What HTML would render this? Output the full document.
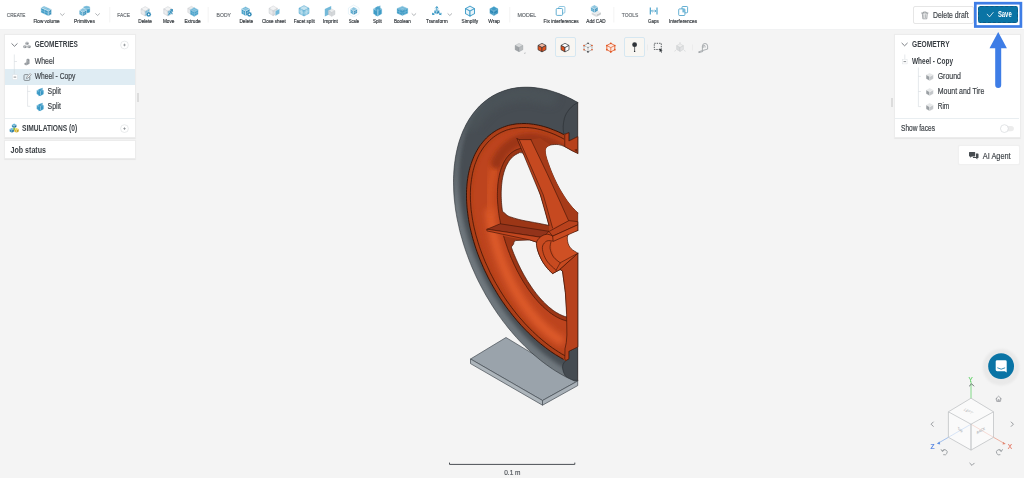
<!DOCTYPE html>
<html>
<head>
<meta charset="utf-8">
<title>Workbench</title>
<style>
*{box-sizing:border-box;margin:0;padding:0}
html,body{width:1024px;height:478px;overflow:hidden}
body{background:#f4f4f4;font-family:"Liberation Sans",sans-serif;color:#3c4146;position:relative}
.abs{position:absolute}
.tx{position:absolute;white-space:nowrap;line-height:1;transform-origin:0 50%;display:block}
#topbar{position:absolute;left:0;top:0;width:1024px;height:29px;background:#fff}
#topline{position:absolute;left:0;top:29px;width:1024px;height:1px;background:#f1f2f3}
.panel{position:absolute;background:#fff;border:1px solid #ececec;border-radius:1px;box-shadow:0 0.5px 1px rgba(0,0,0,0.06)}
.hl{position:absolute;background:#dfecf3}
.sep{position:absolute;height:1px;background:#e9eef1}
.btn{position:absolute;border-radius:2px}
</style>
</head>
<body>

<svg class="abs" style="left:0;top:0" width="1024" height="478" viewBox="0 0 1024 478">
<defs>
<clipPath id="cTire"><path d="M577.9,102.5 L574.7,100.8 L571.6,99.1 L568.4,97.6 L565.2,96.1 L562.0,94.8 L558.9,93.5 L555.7,92.4 L552.6,91.4 L549.4,90.4 L546.3,89.6 L543.2,88.9 L540.1,88.4 L537.1,87.9 L534.0,87.6 L531.0,87.3 L528.0,87.2 L525.1,87.2 L522.2,87.3 L519.3,87.5 L516.4,87.8 L513.6,88.3 L510.9,88.8 L508.1,89.5 L505.5,90.3 L502.8,91.2 L500.3,92.2 L497.7,93.3 L495.3,94.5 L492.9,95.8 L490.5,97.3 L488.2,98.8 L486.0,100.5 L483.8,102.2 L481.7,104.1 L479.6,106.0 L477.7,108.1 L475.8,110.2 L473.9,112.5 L472.2,114.8 L470.5,117.2 L468.8,119.8 L467.3,122.4 L465.8,125.1 L464.5,127.9 L463.1,130.8 L461.9,133.7 L460.8,136.7 L459.7,139.8 L458.7,143.0 L457.8,146.3 L457.0,149.6 L456.3,153.0 L455.6,156.4 L455.1,160.0 L454.6,163.5 L454.2,167.2 L453.9,170.8 L453.7,174.6 L453.5,178.4 L453.5,182.2 L453.6,186.1 L453.7,190.0 L453.9,193.9 L454.2,197.9 L454.6,201.9 L455.1,205.9 L455.6,210.0 L456.3,214.1 L457.0,218.2 L457.9,222.3 L458.8,226.4 L459.7,230.6 L460.8,234.7 L462.0,238.8 L463.2,243.0 L464.5,247.1 L465.9,251.3 L467.4,255.4 L468.9,259.5 L470.5,263.6 L472.2,267.7 L474.0,271.7 L475.8,275.8 L477.7,279.8 L479.7,283.7 L481.8,287.7 L483.9,291.6 L486.0,295.4 L488.3,299.2 L490.6,303.0 L492.9,306.7 L495.4,310.4 L497.8,314.0 L500.4,317.6 L502.9,321.1 L505.6,324.5 L508.2,327.9 L511.0,331.2 L513.7,334.4 L516.5,337.6 L519.4,340.7 L522.3,343.7 L525.2,346.6 L528.1,349.4 L531.1,352.2 L534.1,354.9 L537.2,357.5 L540.2,360.0 L543.3,362.4 L546.4,364.7 L549.5,366.9 L552.7,369.1 L555.8,371.1 L559.0,373.0 L562.1,374.8 L565.3,376.6 L568.5,378.2 L571.7,379.7 L574.8,381.1 L577.9,380.5 Z"/></clipPath>
<clipPath id="cRim"><path d="M563.5,134.4 L561.0,133.1 L558.4,131.9 L555.9,130.8 L553.3,129.8 L550.8,128.8 L548.3,127.9 L545.8,127.1 L543.3,126.4 L540.8,125.7 L538.4,125.2 L535.9,124.7 L533.5,124.3 L531.1,124.0 L528.7,123.7 L526.3,123.6 L524.0,123.5 L521.7,123.6 L519.4,123.7 L517.2,123.8 L515.0,124.1 L512.8,124.5 L510.6,124.9 L508.5,125.4 L506.5,126.0 L504.4,126.7 L502.4,127.5 L500.5,128.3 L498.6,129.2 L496.7,130.2 L494.9,131.3 L493.1,132.5 L491.4,133.7 L489.7,135.1 L488.1,136.4 L486.5,137.9 L485.0,139.5 L483.6,141.1 L482.2,142.8 L480.8,144.5 L479.5,146.3 L478.3,148.2 L477.1,150.2 L476.0,152.2 L474.9,154.3 L473.9,156.5 L473.0,158.7 L472.1,161.0 L471.3,163.3 L470.5,165.7 L469.8,168.1 L469.2,170.6 L468.6,173.2 L468.1,175.8 L467.7,178.4 L467.3,181.1 L467.0,183.9 L466.8,186.7 L466.6,189.5 L466.5,192.3 L466.5,195.2 L466.5,198.2 L466.6,201.2 L466.8,204.2 L467.0,207.2 L467.3,210.2 L467.7,213.3 L468.1,216.4 L468.6,219.6 L469.1,222.7 L469.7,225.9 L470.4,229.0 L471.2,232.2 L472.0,235.4 L472.8,238.6 L473.8,241.8 L474.8,245.1 L475.8,248.3 L476.9,251.5 L478.1,254.7 L479.3,257.9 L480.6,261.1 L482.0,264.3 L483.4,267.5 L484.8,270.7 L486.4,273.8 L487.9,277.0 L489.5,280.1 L491.2,283.2 L492.9,286.2 L494.7,289.3 L496.5,292.3 L498.3,295.3 L500.2,298.2 L502.2,301.2 L504.2,304.0 L506.2,306.9 L508.3,309.7 L510.4,312.4 L512.5,315.2 L514.7,317.8 L516.9,320.5 L519.1,323.0 L521.4,325.6 L523.7,328.0 L526.0,330.4 L528.4,332.8 L530.8,335.1 L533.2,337.4 L535.6,339.5 L538.1,341.7 L540.5,343.7 L543.0,345.7 L545.5,347.6 L548.0,349.5 L550.5,351.3 L553.0,353.0 L555.6,354.7 L558.1,356.2 L560.6,357.7 L563.2,359.2 L565.7,360.7 L568.8,358.8 L568.8,351.3 L577.9,346.9 L577.9,136.5 L568.9,141.0 L568.9,132.8 Z"/></clipPath>
<filter id="b1" x="-30%" y="-30%" width="160%" height="160%"><feGaussianBlur stdDeviation="1"/></filter>
<filter id="b2" x="-30%" y="-30%" width="160%" height="160%"><feGaussianBlur stdDeviation="2"/></filter>
<filter id="b3" x="-30%" y="-30%" width="160%" height="160%"><feGaussianBlur stdDeviation="3"/></filter>
<filter id="b4" x="-30%" y="-30%" width="160%" height="160%"><feGaussianBlur stdDeviation="4.5"/></filter>
</defs>
<g stroke="#444b51" stroke-width="0.7" stroke-linejoin="round">
<path d="M506,337.5 L470.5,359 L542.5,400.5 L577.7,381 Z" fill="#9aa3ab"/>
<path d="M470.5,359 L542.5,400.5 L542.5,405.2 L470.5,363.6 Z" fill="#adb5bb"/>
<path d="M542.5,400.5 L577.7,381 L577.7,385.6 L542.5,405.2 Z" fill="#a9b1b8"/>
</g>
<path d="M577.9,102.5 L574.7,100.8 L571.6,99.1 L568.4,97.6 L565.2,96.1 L562.0,94.8 L558.9,93.5 L555.7,92.4 L552.6,91.4 L549.4,90.4 L546.3,89.6 L543.2,88.9 L540.1,88.4 L537.1,87.9 L534.0,87.6 L531.0,87.3 L528.0,87.2 L525.1,87.2 L522.2,87.3 L519.3,87.5 L516.4,87.8 L513.6,88.3 L510.9,88.8 L508.1,89.5 L505.5,90.3 L502.8,91.2 L500.3,92.2 L497.7,93.3 L495.3,94.5 L492.9,95.8 L490.5,97.3 L488.2,98.8 L486.0,100.5 L483.8,102.2 L481.7,104.1 L479.6,106.0 L477.7,108.1 L475.8,110.2 L473.9,112.5 L472.2,114.8 L470.5,117.2 L468.8,119.8 L467.3,122.4 L465.8,125.1 L464.5,127.9 L463.1,130.8 L461.9,133.7 L460.8,136.7 L459.7,139.8 L458.7,143.0 L457.8,146.3 L457.0,149.6 L456.3,153.0 L455.6,156.4 L455.1,160.0 L454.6,163.5 L454.2,167.2 L453.9,170.8 L453.7,174.6 L453.5,178.4 L453.5,182.2 L453.6,186.1 L453.7,190.0 L453.9,193.9 L454.2,197.9 L454.6,201.9 L455.1,205.9 L455.6,210.0 L456.3,214.1 L457.0,218.2 L457.9,222.3 L458.8,226.4 L459.7,230.6 L460.8,234.7 L462.0,238.8 L463.2,243.0 L464.5,247.1 L465.9,251.3 L467.4,255.4 L468.9,259.5 L470.5,263.6 L472.2,267.7 L474.0,271.7 L475.8,275.8 L477.7,279.8 L479.7,283.7 L481.8,287.7 L483.9,291.6 L486.0,295.4 L488.3,299.2 L490.6,303.0 L492.9,306.7 L495.4,310.4 L497.8,314.0 L500.4,317.6 L502.9,321.1 L505.6,324.5 L508.2,327.9 L511.0,331.2 L513.7,334.4 L516.5,337.6 L519.4,340.7 L522.3,343.7 L525.2,346.6 L528.1,349.4 L531.1,352.2 L534.1,354.9 L537.2,357.5 L540.2,360.0 L543.3,362.4 L546.4,364.7 L549.5,366.9 L552.7,369.1 L555.8,371.1 L559.0,373.0 L562.1,374.8 L565.3,376.6 L568.5,378.2 L571.7,379.7 L574.8,381.1 L577.9,380.5 Z" fill="#70787e" />
<g clip-path="url(#cTire)">
<path d="M484.6,278.7 L480.2,269.6 L476.1,260.3 L472.4,250.9 L469.1,241.4 L466.3,231.9 L463.8,222.5 L461.8,213.0 L460.3,203.7 L459.2,194.4 L458.5,185.3 L458.3,176.4 L458.6,167.7 L459.3,159.3 L460.4,151.2 L462.1,143.3 L464.1,135.9 L466.6,128.8 L469.5,122.2 L472.8,115.9 L476.6,110.2 L480.7,104.9 L485.1,100.1 L490.0,95.9 L495.1,92.2 L500.6,89.0 L506.4,86.4 L512.4,84.4 L518.7,83.0 L525.2,82.2 L531.9,82.0 L538.7,82.3 L545.7,83.3 L552.8,84.9 L560.0,87.0 L567.2,89.7 L574.5,93.0 L581.8,96.8 L589.0,101.2 L596.2,106.1 L603.3,111.5 L610.2,117.4 L617.1,123.7 L623.7,130.5 L630.2,137.6 L636.5,145.2 L642.5,153.1 L648.2,161.3 L653.6,169.7 L658.7,178.5 L663.5,187.4 L668.0,196.6 L672.0,205.9 L675.7,215.2 L679.0,224.7 L681.9,234.2 L684.3,243.7 L686.3,253.1 L687.9,262.5 L689.0,271.7 L689.6,280.8 L689.8,289.7 L689.6,298.4 L688.9,306.8 L687.7,315.0 L686.1,322.8 L684.0,330.2 L681.5,337.3 L678.6,344.0 L675.3,350.2 L671.6,356.0 L667.5,361.2 L663.0,366.0 L658.2,370.3 L653.0,374.0 L647.5,377.1 L641.8,379.7 L635.7,381.7 L629.5,383.1 L623.0,383.9 L616.3,384.2 L609.4,383.8 L602.4,382.8 L595.3,381.3 L588.2,379.1 L580.9,376.4 L573.6,373.1 L566.4,369.3 L559.1,364.9 L552.0,360.0 L544.9,354.7 L537.9,348.8 L531.1,342.4 L524.4,335.7 L517.9,328.5 L511.7,321.0 L505.7,313.1 L500.0,304.9 L494.5,296.4 L489.4,287.7 Z" fill="#464d53" filter="url(#b2)"/>
<path d="M450.0,200.0 C451.0,191.7 452.3,164.7 456.0,150.0 C459.7,135.3 465.0,122.0 472.0,112.0 C479.0,102.0 493.7,93.7 498.0,90.0" fill="none" stroke="#464d53" stroke-width="7" stroke-linejoin="round" stroke-linecap="round" filter="url(#b2)" opacity="0.55"/>
<path d="M470.0,125.0 C473.3,121.5 481.7,109.2 490.0,104.0 C498.3,98.8 510.0,95.0 520.0,94.0 C530.0,93.0 545.0,97.3 550.0,98.0" fill="none" stroke="#4e565c" stroke-width="14" stroke-linejoin="round" stroke-linecap="round" filter="url(#b4)" opacity="0.7"/>
<path d="M577.9,102.5 C572,105 566,112 564.4,118.4 C563,124 562.7,129 563.8,133.6 L565.1,134.2 L568.9,132.7 L568.9,141 L577.9,136.6 Z" fill="#454b51" stroke="#2b3034" stroke-width="0.65" stroke-linejoin="round" stroke-linecap="round" />
<path d="M565.7,360.7 C563,363 562.2,366 562.6,368.5 C563.5,374 566,378 570,380.2 L577.9,380.4 L577.9,346.9 L568.8,351.3 L568.8,358.8 Z" fill="#454b51" stroke="#2b3034" stroke-width="0.65" stroke-linejoin="round" stroke-linecap="round" />
</g>
<path d="M577.9,102.5 L574.7,100.8 L571.6,99.1 L568.4,97.6 L565.2,96.1 L562.0,94.8 L558.9,93.5 L555.7,92.4 L552.6,91.4 L549.4,90.4 L546.3,89.6 L543.2,88.9 L540.1,88.4 L537.1,87.9 L534.0,87.6 L531.0,87.3 L528.0,87.2 L525.1,87.2 L522.2,87.3 L519.3,87.5 L516.4,87.8 L513.6,88.3 L510.9,88.8 L508.1,89.5 L505.5,90.3 L502.8,91.2 L500.3,92.2 L497.7,93.3 L495.3,94.5 L492.9,95.8 L490.5,97.3 L488.2,98.8 L486.0,100.5 L483.8,102.2 L481.7,104.1 L479.6,106.0 L477.7,108.1 L475.8,110.2 L473.9,112.5 L472.2,114.8 L470.5,117.2 L468.8,119.8 L467.3,122.4 L465.8,125.1 L464.5,127.9 L463.1,130.8 L461.9,133.7 L460.8,136.7 L459.7,139.8 L458.7,143.0 L457.8,146.3 L457.0,149.6 L456.3,153.0 L455.6,156.4 L455.1,160.0 L454.6,163.5 L454.2,167.2 L453.9,170.8 L453.7,174.6 L453.5,178.4 L453.5,182.2 L453.6,186.1 L453.7,190.0 L453.9,193.9 L454.2,197.9 L454.6,201.9 L455.1,205.9 L455.6,210.0 L456.3,214.1 L457.0,218.2 L457.9,222.3 L458.8,226.4 L459.7,230.6 L460.8,234.7 L462.0,238.8 L463.2,243.0 L464.5,247.1 L465.9,251.3 L467.4,255.4 L468.9,259.5 L470.5,263.6 L472.2,267.7 L474.0,271.7 L475.8,275.8 L477.7,279.8 L479.7,283.7 L481.8,287.7 L483.9,291.6 L486.0,295.4 L488.3,299.2 L490.6,303.0 L492.9,306.7 L495.4,310.4 L497.8,314.0 L500.4,317.6 L502.9,321.1 L505.6,324.5 L508.2,327.9 L511.0,331.2 L513.7,334.4 L516.5,337.6 L519.4,340.7 L522.3,343.7 L525.2,346.6 L528.1,349.4 L531.1,352.2 L534.1,354.9 L537.2,357.5 L540.2,360.0 L543.3,362.4 L546.4,364.7 L549.5,366.9 L552.7,369.1 L555.8,371.1 L559.0,373.0 L562.1,374.8 L565.3,376.6 L568.5,378.2 L571.7,379.7 L574.8,381.1 L577.9,380.5" fill="none" stroke="#2e3337" stroke-width="0.6" stroke-linejoin="round" stroke-linecap="round" />
<path d="M563.5,134.4 L561.0,133.1 L558.4,131.9 L555.9,130.8 L553.3,129.8 L550.8,128.8 L548.3,127.9 L545.8,127.1 L543.3,126.4 L540.8,125.7 L538.4,125.2 L535.9,124.7 L533.5,124.3 L531.1,124.0 L528.7,123.7 L526.3,123.6 L524.0,123.5 L521.7,123.6 L519.4,123.7 L517.2,123.8 L515.0,124.1 L512.8,124.5 L510.6,124.9 L508.5,125.4 L506.5,126.0 L504.4,126.7 L502.4,127.5 L500.5,128.3 L498.6,129.2 L496.7,130.2 L494.9,131.3 L493.1,132.5 L491.4,133.7 L489.7,135.1 L488.1,136.4 L486.5,137.9 L485.0,139.5 L483.6,141.1 L482.2,142.8 L480.8,144.5 L479.5,146.3 L478.3,148.2 L477.1,150.2 L476.0,152.2 L474.9,154.3 L473.9,156.5 L473.0,158.7 L472.1,161.0 L471.3,163.3 L470.5,165.7 L469.8,168.1 L469.2,170.6 L468.6,173.2 L468.1,175.8 L467.7,178.4 L467.3,181.1 L467.0,183.9 L466.8,186.7 L466.6,189.5 L466.5,192.3 L466.5,195.2 L466.5,198.2 L466.6,201.2 L466.8,204.2 L467.0,207.2 L467.3,210.2 L467.7,213.3 L468.1,216.4 L468.6,219.6 L469.1,222.7 L469.7,225.9 L470.4,229.0 L471.2,232.2 L472.0,235.4 L472.8,238.6 L473.8,241.8 L474.8,245.1 L475.8,248.3 L476.9,251.5 L478.1,254.7 L479.3,257.9 L480.6,261.1 L482.0,264.3 L483.4,267.5 L484.8,270.7 L486.4,273.8 L487.9,277.0 L489.5,280.1 L491.2,283.2 L492.9,286.2 L494.7,289.3 L496.5,292.3 L498.3,295.3 L500.2,298.2 L502.2,301.2 L504.2,304.0 L506.2,306.9 L508.3,309.7 L510.4,312.4 L512.5,315.2 L514.7,317.8 L516.9,320.5 L519.1,323.0 L521.4,325.6 L523.7,328.0 L526.0,330.4 L528.4,332.8 L530.8,335.1 L533.2,337.4 L535.6,339.5 L538.1,341.7 L540.5,343.7 L543.0,345.7 L545.5,347.6 L548.0,349.5 L550.5,351.3 L553.0,353.0 L555.6,354.7 L558.1,356.2 L560.6,357.7 L563.2,359.2 L565.7,360.7 L568.8,358.8 L568.8,351.3 L577.9,346.9 L577.9,136.5 L568.9,141.0 L568.9,132.8 Z" fill="#bd441e" />
<g clip-path="url(#cRim)">
<path d="M563.5,134.4 L561.0,133.1 L558.4,131.9 L555.9,130.8 L553.3,129.8 L550.8,128.8 L548.3,127.9 L545.8,127.1 L543.3,126.4 L540.8,125.7 L538.4,125.2 L535.9,124.7 L533.5,124.3 L531.1,124.0 L528.7,123.7 L526.3,123.6 L524.0,123.5 L521.7,123.6 L519.4,123.7 L517.2,123.8 L515.0,124.1 L512.8,124.5 L510.6,124.9 L508.5,125.4 L506.5,126.0 L504.4,126.7 L502.4,127.5 L500.5,128.3 L498.6,129.2 L496.7,130.2 L494.9,131.3 L493.1,132.5 L491.4,133.7 L489.7,135.1 L488.1,136.4 L486.5,137.9 L485.0,139.5 L483.6,141.1 L482.2,142.8 L480.8,144.5 L479.5,146.3 L478.3,148.2 L477.1,150.2 L476.0,152.2 L474.9,154.3 L473.9,156.5 L473.0,158.7 L472.1,161.0 L471.3,163.3 L470.5,165.7 L469.8,168.1 L469.2,170.6 L468.6,173.2 L468.1,175.8 L467.7,178.4 L467.3,181.1 L467.0,183.9 L466.8,186.7 L466.6,189.5 L466.5,192.3 L466.5,195.2 L466.5,198.2 L466.6,201.2 L466.8,204.2 L467.0,207.2 L467.3,210.2 L467.7,213.3 L468.1,216.4 L468.6,219.6 L469.1,222.7 L469.7,225.9 L470.4,229.0 L471.2,232.2 L472.0,235.4 L472.8,238.6 L473.8,241.8 L474.8,245.1 L475.8,248.3 L476.9,251.5 L478.1,254.7 L479.3,257.9 L480.6,261.1 L482.0,264.3 L483.4,267.5 L484.8,270.7 L486.4,273.8 L487.9,277.0 L489.5,280.1 L491.2,283.2 L492.9,286.2 L494.7,289.3 L496.5,292.3 L498.3,295.3 L500.2,298.2 L502.2,301.2 L504.2,304.0 L506.2,306.9 L508.3,309.7 L510.4,312.4 L512.5,315.2 L514.7,317.8 L516.9,320.5 L519.1,323.0 L521.4,325.6 L523.7,328.0 L526.0,330.4 L528.4,332.8 L530.8,335.1 L533.2,337.4 L535.6,339.5 L538.1,341.7 L540.5,343.7 L543.0,345.7 L545.5,347.6 L548.0,349.5 L550.5,351.3 L553.0,353.0 L555.6,354.7 L558.1,356.2 L560.6,357.7 L563.2,359.2" fill="none" stroke="#a83c19" stroke-width="9" stroke-linejoin="round" stroke-linecap="round" filter="url(#b2)"/>
<path d="M490.1,212.3 L490.4,216.0 L490.9,219.7 L491.4,223.4 L492.0,227.2 L492.7,231.0 L493.6,234.8 L494.4,238.6 L495.4,242.4 L496.5,246.3 L497.6,250.1 L498.9,253.9 L500.2,257.7 L501.6,261.5 L503.0,265.3 L504.6,269.0 L506.2,272.7 L507.9,276.4 L509.6,280.0 L511.4,283.6 L513.3,287.1 L515.3,290.5 L517.3,293.9 L519.3,297.3 L521.4,300.6 L523.6,303.7 L525.8,306.9 L528.1,309.9 L530.4,312.8 L532.7,315.7 L535.1,318.5 L537.5,321.1 L539.9,323.7 L542.3,326.1 L544.8,328.5 L547.3,330.7 L549.8,332.9 L552.4,334.9 L554.9,336.7 L557.5,338.5 L560.0,340.2" fill="none" stroke="#df5c2b" stroke-width="9" stroke-linejoin="round" stroke-linecap="round" filter="url(#b3)"/>
<path d="M494.7,167.5 L494.0,169.4 L493.4,171.3 L492.8,173.3 L492.3,175.3 L491.9,177.3 L491.4,179.4 L491.0,181.5 L490.7,183.7 L490.4,185.9 L490.1,188.1 L489.9,190.4 L489.8,192.7 L489.6,195.1 L489.6,197.5 L489.5,199.9 L489.5,202.3 L489.6,204.8 L489.7,207.3 L489.9,209.8 L490.1,212.3" fill="none" stroke="#d35324" stroke-width="7" stroke-linejoin="round" stroke-linecap="round" filter="url(#b3)"/>
<path d="M496.4,163.3 L497.7,160.6 L499.0,158.1 L500.5,155.7 L502.0,153.5 L503.7,151.4 L505.4,149.5 L507.3,147.7 L509.2,146.1 L511.2,144.6 L513.3,143.3 L515.4,142.1 L517.6,141.1 L519.9,140.3 L522.3,139.7 L524.7,139.2 L527.2,138.9 L529.7,138.7 L532.3,138.8 L534.9,139.0 L537.5,139.3 L540.2,139.9 L542.9,140.6 L545.7,141.4 L548.5,142.5 L551.3,143.7 L554.1,145.0 L556.9,146.6 L559.7,148.2 L562.5,150.1 L565.3,152.1" fill="none" stroke="#9c3616" stroke-width="11" stroke-linejoin="round" stroke-linecap="round" filter="url(#b2)"/>
</g>
<path d="M563.8,139.0 L560.9,137.4 L557.9,136.0 L555.0,134.6 L552.0,133.4 L549.1,132.3 L546.2,131.3 L543.3,130.4 L540.5,129.6 L537.6,129.0 L534.8,128.4 L532.0,128.0 L529.3,127.7 L526.6,127.5 L523.9,127.5 L521.2,127.5 L518.6,127.7 L516.1,128.0 L513.6,128.4 L511.1,128.9 L508.7,129.5 L506.4,130.2 L504.1,131.1 L501.8,132.1 L499.7,133.2 L497.6,134.4 L495.5,135.7 L493.6,137.1 L491.6,138.7 L489.8,140.3 L488.1,142.0 L486.4,143.9 L484.8,145.8 L483.2,147.9 L481.8,150.0 L480.4,152.3 L479.1,154.6 L477.9,157.0 L476.8,159.6 L475.8,162.2 L474.8,164.8 L474.0,167.6 L473.2,170.5 L472.5,173.4 L472.0,176.4 L471.5,179.4 L471.1,182.6 L470.7,185.8 L470.5,189.0 L470.4,192.3 L470.4,195.7 L470.4,199.1 L470.6,202.6 L470.8,206.1 L471.1,209.6 L471.6,213.2 L472.1,216.8 L472.7,220.5 L473.4,224.2 L474.2,227.8 L475.1,231.6 L476.0,235.3 L477.1,239.0 L478.2,242.8 L479.4,246.6 L480.7,250.3 L482.1,254.1 L483.6,257.8 L485.1,261.6 L486.8,265.3 L488.5,269.0 L490.2,272.7 L492.1,276.3 L494.0,280.0 L496.0,283.6 L498.1,287.1 L500.2,290.7 L502.4,294.2 L504.6,297.6 L506.9,301.0 L509.3,304.3 L511.7,307.6 L514.2,310.8 L516.7,314.0 L519.2,317.1 L521.9,320.1 L524.5,323.1 L527.2,325.9 L529.9,328.7 L532.7,331.5 L535.5,334.1 L538.3,336.7 L541.1,339.1 L544.0,341.5 L546.9,343.8 L549.8,346.0 L552.7,348.1 L555.7,350.1 L558.6,352.0 L561.5,353.8 L564.5,355.5" fill="none" stroke="#3f1306" stroke-width="0.8" stroke-linejoin="round" stroke-linecap="round" />
<path d="M521.7,148.2 L520.5,148.4 L519.4,148.7 L518.2,149.1 L517.1,149.5 L516.0,149.9 L514.9,150.5 L513.8,151.1 L512.8,151.8 L511.8,152.5 L510.8,153.3 L509.9,154.2 L508.9,155.1 L508.1,156.1 L507.2,157.1 L506.4,158.2 L505.6,159.4 L504.8,160.6 L504.1,161.9 L503.4,163.2 L502.8,164.6 L502.2,166.0 L501.6,167.5 L501.0,169.1 L500.5,170.7 L500.0,172.3 L499.6,174.0 L499.2,175.8 L498.9,177.6 L498.5,179.4 L498.3,181.3 L498.0,183.2 L497.8,185.1 L497.7,187.1 L497.5,189.2 L497.5,191.2 L497.4,193.3 L497.4,195.5 L497.4,197.6 L497.5,199.8 L497.6,202.0 L497.8,204.3 L498.0,206.5 L498.2,208.8 L498.5,211.1 L498.8,213.5 L499.1,215.8 L499.5,218.2 L500.0,220.5 L500.4,222.9 L500.9,225.3 L549.0,231.0 L552.0,226.0 L517.0,138.6 Z" fill="#9c3616" />
<path d="M521.7,148.2 L520.5,148.4 L519.4,148.7 L518.2,149.1 L517.1,149.5 L516.0,149.9 L514.9,150.5 L513.8,151.1 L512.8,151.8 L511.8,152.5 L510.8,153.3 L509.9,154.2 L508.9,155.1 L508.1,156.1 L507.2,157.1 L506.4,158.2 L505.6,159.4 L504.8,160.6 L504.1,161.9 L503.4,163.2 L502.8,164.6 L502.2,166.0 L501.6,167.5 L501.0,169.1 L500.5,170.7 L500.0,172.3 L499.6,174.0 L499.2,175.8 L498.9,177.6 L498.5,179.4 L498.3,181.3 L498.0,183.2 L497.8,185.1 L497.7,187.1 L497.5,189.2 L497.5,191.2 L497.4,193.3 L497.4,195.5 L497.4,197.6 L497.5,199.8 L497.6,202.0 L497.8,204.3 L498.0,206.5 L498.2,208.8 L498.5,211.1 L498.8,213.5 L499.1,215.8 L499.5,218.2 L500.0,220.5 L500.4,222.9 L500.9,225.3" fill="none" stroke="#421406" stroke-width="0.7" stroke-linejoin="round" stroke-linecap="round" />
<path d="M503.6,236.1 L504.4,238.6 L505.1,241.1 L505.9,243.6 L506.8,246.1 L507.6,248.6 L508.5,251.1 L509.5,253.5 L510.4,256.0 L511.4,258.4 L512.5,260.8 L513.5,263.2 L514.6,265.5 L515.8,267.9 L516.9,270.2 L518.1,272.4 L519.3,274.7 L520.5,276.9 L521.8,279.1 L523.0,281.2 L524.3,283.3 L525.7,285.3 L527.0,287.4 L528.3,289.3 L529.7,291.3 L531.1,293.1 L532.5,295.0 L533.9,296.8 L535.3,298.5 L536.8,300.2 L538.2,301.8 L539.7,303.4 L541.2,304.9 L542.6,306.3 L544.1,307.7 L545.6,309.0 L547.1,310.3 L548.6,311.5 L550.0,312.7 L551.5,313.7 L553.0,314.8 L554.5,315.7 L556.0,316.6 L557.4,317.4 L558.9,318.1 L560.4,318.8 L561.8,319.4 L563.2,319.9 L564.7,320.4 L566.1,320.8 L567.5,321.1 L566.6,314.6 L562.5,270.9 L536.5,242.1 Z" fill="#9c3616" />
<path d="M503.6,236.1 L504.4,238.6 L505.1,241.1 L505.9,243.6 L506.8,246.1 L507.6,248.6 L508.5,251.1 L509.5,253.5 L510.4,256.0 L511.4,258.4 L512.5,260.8 L513.5,263.2 L514.6,265.5 L515.8,267.9 L516.9,270.2 L518.1,272.4 L519.3,274.7 L520.5,276.9 L521.8,279.1 L523.0,281.2 L524.3,283.3 L525.7,285.3 L527.0,287.4 L528.3,289.3 L529.7,291.3 L531.1,293.1 L532.5,295.0 L533.9,296.8 L535.3,298.5 L536.8,300.2 L538.2,301.8 L539.7,303.4 L541.2,304.9 L542.6,306.3 L544.1,307.7 L545.6,309.0 L547.1,310.3 L548.6,311.5 L550.0,312.7 L551.5,313.7 L553.0,314.8 L554.5,315.7 L556.0,316.6 L557.4,317.4 L558.9,318.1 L560.4,318.8 L561.8,319.4 L563.2,319.9 L564.7,320.4 L566.1,320.8 L567.5,321.1" fill="none" stroke="#421406" stroke-width="0.7" stroke-linejoin="round" stroke-linecap="round" />
<path d="M524.3,154.8 Q522.5,151.6 519.5,152.6 L518.5,153.2 L517.5,153.6 L516.5,154.2 L515.5,154.7 L514.5,155.4 L513.6,156.1 L512.7,156.8 L511.8,157.7 L511.0,158.6 L510.2,159.5 L509.4,160.5 L508.7,161.6 L508.0,162.8 L507.3,164.0 L506.6,165.2 L506.0,166.5 L505.4,167.9 L504.9,169.3 L504.4,170.8 L503.9,172.3 L503.5,173.9 L503.1,175.5 L502.7,177.2 L502.4,178.9 L502.1,180.6 L501.9,182.5 L501.7,184.3 L501.5,186.2 L501.4,188.1 L501.3,190.1 L501.2,192.1 L501.2,194.1 L501.2,196.2 L501.3,198.3 L501.4,200.4 L501.5,202.6 L501.7,204.8 L501.9,207.0 L502.2,209.2 L502.5,211.5 C505.0,213.0 506.2,214.8 507.5,215.6 C508.8,216.4 509.6,216.6 512.0,217.4 C514.4,218.2 517.6,219.2 522.0,220.2 C526.4,221.2 534.0,222.4 538.5,223.3 C543.0,224.2 547.2,225.1 549.0,225.4 L544.5,207.6 L538.5,188.8 L531.5,170.0 Z" fill="#f4f4f4" stroke="#421406" stroke-width="0.7" stroke-linejoin="round" stroke-linecap="round" />
<path d="M515.5,240.6 Q513.4,241 513.6,244 L511.3,247.0 L512.1,249.2 L512.9,251.3 L513.7,253.5 L514.6,255.6 L515.5,257.7 L516.4,259.8 L517.4,261.9 L518.3,264.0 L519.3,266.0 L520.3,268.1 L521.3,270.1 L522.4,272.1 L523.4,274.0 L524.5,275.9 L525.6,277.8 L526.7,279.7 L527.8,281.5 L529.0,283.3 L530.2,285.1 L531.3,286.8 L532.5,288.5 L533.7,290.2 L534.9,291.8 L536.1,293.4 L537.3,294.9 L538.6,296.4 L539.8,297.9 L541.1,299.3 L542.3,300.6 L543.6,302.0 L544.8,303.2 L546.1,304.4 L547.4,305.6 L548.6,306.7 L549.9,307.8 L551.2,308.8 L552.4,309.8 L553.7,310.7 L554.9,311.6 L556.2,312.4 L557.5,313.1 L558.7,313.8 L559.9,314.5 L561.2,315.0 L562.4,315.6 L563.6,316.0 L564.8,316.5 L566.0,316.8 L567.2,317.1 L565.4,292.6 L562.5,271.0 L560.2,269.5 L552.6,273.6 C551.8,272.8 549.4,270.8 547.6,268.6 C545.8,266.4 543.5,263.4 541.8,260.3 C540.1,257.2 538.5,253.2 537.6,250.2 C536.8,247.2 536.9,243.5 536.7,242.2 L530.0,240.0 Z" fill="#f4f4f4" stroke="#421406" stroke-width="0.7" stroke-linejoin="round" stroke-linecap="round" />
<path d="M577.9,212.9 C577.0,212.0 574.4,209.6 572.5,207.5 C570.6,205.4 568.6,202.9 566.8,200.3 C565.0,197.7 563.2,194.8 561.5,192.0 C559.8,189.2 558.4,186.7 556.8,183.5 C555.2,180.3 553.4,176.3 552.0,173.0 C550.6,169.7 549.4,166.3 548.4,163.5 C547.4,160.7 546.5,158.2 546.0,156.0 C545.5,153.8 545.2,151.9 545.3,150.5 C545.4,149.1 545.6,148.2 546.5,147.3 C547.4,146.4 548.5,145.4 550.5,145.0 C552.5,144.6 556.0,144.3 558.4,144.6 C560.8,144.9 562.9,145.8 565.1,146.8 C567.3,147.8 569.7,149.4 571.8,150.5 C573.9,151.6 576.9,152.9 577.9,153.4 L579.9,154.2 L579.9,212.9 Z" fill="#f4f4f4" />
<path d="M577.9,212.9 C577.0,212.0 574.4,209.6 572.5,207.5 C570.6,205.4 568.6,202.9 566.8,200.3 C565.0,197.7 563.2,194.8 561.5,192.0 C559.8,189.2 558.4,186.7 556.8,183.5 C555.2,180.3 553.4,176.3 552.0,173.0 C550.6,169.7 549.4,166.3 548.4,163.5 C547.4,160.7 546.5,158.2 546.0,156.0 C545.5,153.8 545.2,151.9 545.3,150.5 C545.4,149.1 545.6,148.2 546.5,147.3 C547.4,146.4 548.5,145.4 550.5,145.0 C552.5,144.6 556.0,144.3 558.4,144.6 C560.8,144.9 562.9,145.8 565.1,146.8 C567.3,147.8 569.7,149.4 571.8,150.5 C573.9,151.6 576.9,152.9 577.9,153.4" fill="none" stroke="#421406" stroke-width="0.7" stroke-linejoin="round" stroke-linecap="round" />
<path d="M565.1,134.2 L568.9,132.7 L568.9,141 L577.9,136.6 L577.9,153.4 L571.8,150.5 L565.1,146.8 Z" fill="#b7411c" stroke="#421406" stroke-width="0.65" stroke-linejoin="round" stroke-linecap="round" />
<path d="M574.3,149.7 L576.9,148.9 L576.9,151.9 Z" fill="#5e1f0d" />
<path d="M530.9,139.6 L547,173.3 L559.3,200 L568.5,220.5 L577.9,221.5 L577.9,212.9 L572.5,207.5 L566.8,200.3 L561.5,192 L556.8,183.5 L552,173 L548.4,163.5 L546,156 L545.3,150.5 L546.5,147.3 L550.5,145 L540,138 Z" fill="#a63b19" />
<path d="M519.2,139.6 L530.9,139.6 L547,173.3 L559.3,200 L568.5,220.5 L552.6,228 L543.3,195 Z" fill="#c64920" />
<path d="M517,138.6 L519.2,139.6 L543.3,195 L552.6,228 L549.3,231 L549,225.4 L540.4,195 Z" fill="#b5411c" />
<path d="M517,138.6 L540.4,195 L549,225.4" fill="none" stroke="#421406" stroke-width="0.7" stroke-linejoin="round" stroke-linecap="round" />
<path d="M519.2,139.6 L543.3,195 L552.6,228" fill="none" stroke="#421406" stroke-width="0.6" stroke-linejoin="round" stroke-linecap="round" />
<path d="M530.9,139.6 L547,173.3 L559.3,200 L568.5,220.5" fill="none" stroke="#421406" stroke-width="0.65" stroke-linejoin="round" stroke-linecap="round" />
<path d="M517,138.6 L519.2,139.6 L530.9,139.6" fill="none" stroke="#421406" stroke-width="0.65" stroke-linejoin="round" stroke-linecap="round" />
<path d="M487.2,229.2 L500.2,223.8 L549,231.3 L542.7,237.6 L530,235.6 Z" fill="#93331a" stroke="#421406" stroke-width="0.65" stroke-linejoin="round" stroke-linecap="round" />
<path d="M487.2,229.2 L530,235.6 L542.7,237.6 L536.7,242.2 L530,240 L487.3,231 Z" fill="#c2461f" stroke="#421406" stroke-width="0.65" stroke-linejoin="round" stroke-linecap="round" />
<path d="M552.6,236.0 C551.8,235.7 549.4,234.3 547.6,234.3 C545.8,234.3 543.6,234.8 541.8,236.0 C540.0,237.2 537.4,239.4 536.7,241.8 C536.0,244.2 536.8,247.1 537.6,250.2 C538.5,253.3 540.1,257.2 541.8,260.3 C543.5,263.4 545.8,266.4 547.6,268.6 C549.4,270.8 551.8,272.8 552.6,273.6 L560.2,269.5 L577.9,253.6 L577.9,230.0 L553.0,241.0 Z" fill="#c84a20" />
<path d="M553,241 L568.5,234.3 C567,240 569,247 577.5,253.2 L560.2,262.8 C555,259 551,250 551,243 Z" fill="#cf5024" />
<path d="M577.9,230.5 C576.3,231.1 570.2,232.4 568.5,234.3 C566.8,236.2 567.3,239.4 567.7,241.8 C568.1,244.2 569.3,246.6 571.0,248.5 C572.7,250.4 576.8,252.4 577.9,253.2 L579.9,253.2 L579.9,230.5 Z" fill="#f4f4f4" />
<path d="M577.9,230.5 C576.3,231.1 570.2,232.4 568.5,234.3 C566.8,236.2 567.3,239.4 567.7,241.8 C568.1,244.2 569.3,246.6 571.0,248.5 C572.7,250.4 576.8,252.4 577.9,253.2" fill="none" stroke="#421406" stroke-width="0.65" stroke-linejoin="round" stroke-linecap="round" />
<path d="M552.6,241.0 C551.6,241.0 548.5,240.2 546.8,241.0 C545.1,241.8 543.2,243.9 542.6,246.0 C542.0,248.1 542.6,250.9 543.4,253.6 C544.2,256.3 545.9,259.6 547.6,262.0 C549.3,264.4 552.1,266.4 553.5,267.8 C554.9,269.2 555.6,269.9 556.0,270.3" fill="none" stroke="#421406" stroke-width="0.65" stroke-linejoin="round" stroke-linecap="round" />
<path d="M551.0,241.8 C550.9,242.9 549.7,246.0 550.1,248.5 C550.5,251.0 551.8,254.6 553.5,257.0 C555.2,259.4 559.1,261.8 560.2,262.8" fill="none" stroke="#421406" stroke-width="0.65" stroke-linejoin="round" stroke-linecap="round" />
<path d="M552.6,236.0 C551.8,235.7 549.4,234.3 547.6,234.3 C545.8,234.3 543.6,234.8 541.8,236.0 C540.0,237.2 537.4,239.4 536.7,241.8 C536.0,244.2 536.8,247.1 537.6,250.2 C538.5,253.3 540.1,257.2 541.8,260.3 C543.5,263.4 545.8,266.4 547.6,268.6 C549.4,270.8 551.8,272.8 552.6,273.6 L560.2,269.5 L577.9,253.6" fill="none" stroke="#421406" stroke-width="0.7" stroke-linejoin="round" stroke-linecap="round" />
<path d="M556,270.3 L560.2,262.8 L577.9,253.2" fill="none" stroke="#421406" stroke-width="0.6" stroke-linejoin="round" stroke-linecap="round" />
<path d="M549.3,231.3 L568.9,220.6 L577.9,221.7 L577.9,224.8 L553,236 Z" fill="#b9421d" stroke="#421406" stroke-width="0.65" stroke-linejoin="round" stroke-linecap="round" />
<path d="M553,236 L577.9,224.8 L577.9,230.4 L553.5,241.3 Z" fill="#c94b21" stroke="#421406" stroke-width="0.65" stroke-linejoin="round" stroke-linecap="round" />
<path d="M560.2,269.5 L562.5,271.0 L565.4,292.6 L566.6,314.6 L566.9,335.0 L566.3,342.5 L565.0,348.8 L564.8,358.8 L565.7,360.7 L568.8,358.8 L568.8,351.3 L577.9,346.9 L577.9,253.6 Z" fill="#b7411c" stroke="#421406" stroke-width="0.65" stroke-linejoin="round" stroke-linecap="round" />
<path d="M563.5,134.4 L561.0,133.1 L558.4,131.9 L555.9,130.8 L553.3,129.8 L550.8,128.8 L548.3,127.9 L545.8,127.1 L543.3,126.4 L540.8,125.7 L538.4,125.2 L535.9,124.7 L533.5,124.3 L531.1,124.0 L528.7,123.7 L526.3,123.6 L524.0,123.5 L521.7,123.6 L519.4,123.7 L517.2,123.8 L515.0,124.1 L512.8,124.5 L510.6,124.9 L508.5,125.4 L506.5,126.0 L504.4,126.7 L502.4,127.5 L500.5,128.3 L498.6,129.2 L496.7,130.2 L494.9,131.3 L493.1,132.5 L491.4,133.7 L489.7,135.1 L488.1,136.4 L486.5,137.9 L485.0,139.5 L483.6,141.1 L482.2,142.8 L480.8,144.5 L479.5,146.3 L478.3,148.2 L477.1,150.2 L476.0,152.2 L474.9,154.3 L473.9,156.5 L473.0,158.7 L472.1,161.0 L471.3,163.3 L470.5,165.7 L469.8,168.1 L469.2,170.6 L468.6,173.2 L468.1,175.8 L467.7,178.4 L467.3,181.1 L467.0,183.9 L466.8,186.7 L466.6,189.5 L466.5,192.3 L466.5,195.2 L466.5,198.2 L466.6,201.2 L466.8,204.2 L467.0,207.2 L467.3,210.2 L467.7,213.3 L468.1,216.4 L468.6,219.6 L469.1,222.7 L469.7,225.9 L470.4,229.0 L471.2,232.2 L472.0,235.4 L472.8,238.6 L473.8,241.8 L474.8,245.1 L475.8,248.3 L476.9,251.5 L478.1,254.7 L479.3,257.9 L480.6,261.1 L482.0,264.3 L483.4,267.5 L484.8,270.7 L486.4,273.8 L487.9,277.0 L489.5,280.1 L491.2,283.2 L492.9,286.2 L494.7,289.3 L496.5,292.3 L498.3,295.3 L500.2,298.2 L502.2,301.2 L504.2,304.0 L506.2,306.9 L508.3,309.7 L510.4,312.4 L512.5,315.2 L514.7,317.8 L516.9,320.5 L519.1,323.0 L521.4,325.6 L523.7,328.0 L526.0,330.4 L528.4,332.8 L530.8,335.1 L533.2,337.4 L535.6,339.5 L538.1,341.7 L540.5,343.7 L543.0,345.7 L545.5,347.6 L548.0,349.5 L550.5,351.3 L553.0,353.0 L555.6,354.7 L558.1,356.2 L560.6,357.7 L563.2,359.2" fill="none" stroke="#2e0f05" stroke-width="0.9" stroke-linejoin="round" stroke-linecap="round" />
<path d="M577.9,102.5 V152.8 M577.9,212.9 V230.4 M577.9,253.4 V380.5" fill="none" stroke="#3a2a26" stroke-width="0.4" stroke-linejoin="round" stroke-linecap="round" />
<path d="M449.5,462.6 V464.4 H574.8 V462.6" fill="none" stroke="#4a4f54" stroke-width="1"/>
</svg>
<div id="topbar"></div><div id="topline"></div>
<svg class="abs" style="left:0;top:0" width="1024" height="30" viewBox="0 0 1024 30">
<rect x="109.4" y="7" width="0.8" height="15.5" fill="#f0f0f0"/>
<rect x="207.7" y="7" width="0.8" height="15.5" fill="#f0f0f0"/>
<rect x="509.4" y="7" width="0.8" height="15.5" fill="#f0f0f0"/>
<rect x="613.5" y="7" width="0.8" height="15.5" fill="#f0f0f0"/>
<g stroke="#fff" stroke-width="0.4" stroke-linejoin="round"><polygon points="44,5.9 51.5,9.3 48.3,11 40.9,7.7" fill="#73b9d9"/><polygon points="40.9,7.7 48.3,11 48.3,16 40.9,12.5" fill="#3f9cc7"/><polygon points="48.3,11 51.5,9.3 51.5,14.2 48.3,16" fill="#2a87b5"/><path d="M42.4,6.8 l7.4,3.4 v5 M40.9,10.1 l7.4,3.4 l3.2,-1.7 M44.6,9.3 v5 M46.2,6.9 l-3.1,1.7" stroke="#d6ebf5" stroke-width="0.3" fill="none"/></g>
<path d="M60.40,13.70 l1.9,1.8 l1.9,-1.8" fill="none" stroke="#7a7f84" stroke-width="0.6" stroke-linecap="round" stroke-linejoin="round"/>
<g stroke="#fff" stroke-width="0.4"><path d="M83.3,7.4 v4.2 a3.4,1.7 0 0 0 6.8,0 v-4.2 z" fill="#3f9cc7"/><ellipse cx="86.7" cy="7.4" rx="3.4" ry="1.7" fill="#73b9d9"/></g>
<g stroke="#ffffff" stroke-width="0.4" stroke-linejoin="round" opacity="1"><polygon points="82.90,8.10 86.50,10.15 82.90,12.20 79.30,10.15" fill="#73b9d9"/><polygon points="79.30,10.15 82.90,12.20 82.90,16.30 79.30,14.25" fill="#3f9cc7"/><polygon points="82.90,12.20 86.50,10.15 86.50,14.25 82.90,16.30" fill="#2a87b5"/></g><path d="M81.10,9.12 L84.70,11.17 M84.70,9.12 L81.10,11.17 M79.30,12.20 L82.90,14.25 M81.10,11.17 L81.10,15.27 M82.90,14.25 L86.50,12.20 M84.70,11.17 L84.70,15.27" stroke="#d6ebf5" stroke-width="0.3" fill="none" opacity="1"/>
<path d="M95.70,13.70 l1.9,1.8 l1.9,-1.8" fill="none" stroke="#7a7f84" stroke-width="0.6" stroke-linecap="round" stroke-linejoin="round"/>
<g stroke="#c2c6c9" stroke-width="0.4" stroke-linejoin="round" opacity="1"><polygon points="145.20,6.60 149.40,8.95 145.20,11.30 141.00,8.95" fill="#f1f2f3"/><polygon points="141.00,8.95 145.20,11.30 145.20,16.00 141.00,13.65" fill="#e6e8ea"/><polygon points="145.20,11.30 149.40,8.95 149.40,13.65 145.20,16.00" fill="#73b9d9"/></g><path d="M143.10,7.78 L147.30,10.12 M147.30,7.78 L143.10,10.12 M141.00,11.30 L145.20,13.65 M143.10,10.12 L143.10,14.82 M145.20,13.65 L149.40,11.30 M147.30,10.12 L147.30,14.82" stroke="#f7f8f8" stroke-width="0.3" fill="none" opacity="1"/>
<circle cx="148.70" cy="14.40" r="2.40" fill="#2483b3" stroke="#fff" stroke-width="0.3"/><circle cx="148.70" cy="14.40" r="0.91" fill="#fff"/>
<g stroke="#c2c6c9" stroke-width="0.4" stroke-linejoin="round" opacity="1"><polygon points="167.90,6.60 172.10,8.95 167.90,11.30 163.70,8.95" fill="#f1f2f3"/><polygon points="163.70,8.95 167.90,11.30 167.90,16.00 163.70,13.65" fill="#e6e8ea"/><polygon points="167.90,11.30 172.10,8.95 172.10,13.65 167.90,16.00" fill="#73b9d9"/></g><path d="M165.80,7.78 L170.00,10.12 M170.00,7.78 L165.80,10.12 M163.70,11.30 L167.90,13.65 M165.80,10.12 L165.80,14.82 M167.90,13.65 L172.10,11.30 M170.00,10.12 L170.00,14.82" stroke="#f7f8f8" stroke-width="0.3" fill="none" opacity="1"/>
<path d="M169,14.2 L172.4,9.6 M170.6,9.7 L172.4,9.6 L172.6,11.4 M170.2,11.6 l2.3,2.2" stroke="#2a87b5" stroke-width="0.8" fill="none" stroke-linecap="round"/>
<g stroke="#c2c6c9" stroke-width="0.4" stroke-linejoin="round" opacity="1"><polygon points="191.40,6.30 195.00,8.35 191.40,10.40 187.80,8.35" fill="#e9ebec"/><polygon points="187.80,8.35 191.40,10.40 191.40,14.50 187.80,12.45" fill="#e9ebec"/><polygon points="191.40,10.40 195.00,8.35 195.00,12.45 191.40,14.50" fill="#e9ebec"/></g>
<g stroke="#a6d3e8" stroke-width="0.35" stroke-linejoin="round" opacity="1"><polygon points="194.20,7.50 198.10,9.75 194.20,12.00 190.30,9.75" fill="#73b9d9"/><polygon points="190.30,9.75 194.20,12.00 194.20,16.50 190.30,14.25" fill="#3f9cc7"/><polygon points="194.20,12.00 198.10,9.75 198.10,14.25 194.20,16.50" fill="#3f9cc7"/></g><path d="M192.25,8.62 L196.15,10.88 M196.15,8.62 L192.25,10.88 M190.30,12.00 L194.20,14.25 M192.25,10.88 L192.25,15.38 M194.20,14.25 L198.10,12.00 M196.15,10.88 L196.15,15.38" stroke="#b5daeb" stroke-width="0.3" fill="none" opacity="1"/>
<g stroke="#ffffff" stroke-width="0.4" stroke-linejoin="round" opacity="1"><polygon points="245.60,6.40 249.80,8.80 245.60,11.20 241.40,8.80" fill="#73b9d9"/><polygon points="241.40,8.80 245.60,11.20 245.60,16.00 241.40,13.60" fill="#3f9cc7"/><polygon points="245.60,11.20 249.80,8.80 249.80,13.60 245.60,16.00" fill="#2a87b5"/></g><path d="M243.50,7.60 L247.70,10.00 M247.70,7.60 L243.50,10.00 M241.40,11.20 L245.60,13.60 M243.50,10.00 L243.50,14.80 M245.60,13.60 L249.80,11.20 M247.70,10.00 L247.70,14.80" stroke="#cfe7f2" stroke-width="0.3" fill="none" opacity="1"/>
<circle cx="249.40" cy="14.30" r="2.40" fill="#2483b3" stroke="#fff" stroke-width="0.3"/><circle cx="249.40" cy="14.30" r="0.91" fill="#fff"/>
<g stroke="#c2c6c9" stroke-width="0.4" stroke-linejoin="round" opacity="1"><polygon points="273.20,5.90 277.40,8.35 273.20,10.80 269.00,8.35" fill="#f1f2f3"/><polygon points="269.00,8.35 273.20,10.80 273.20,15.70 269.00,13.25" fill="#e3e5e7"/><polygon points="273.20,10.80 277.40,8.35 277.40,13.25 273.20,15.70" fill="#d4d7da"/></g><path d="M271.10,7.13 L275.30,9.58 M275.30,7.13 L271.10,9.58 M269.00,10.80 L273.20,13.25 M271.10,9.58 L271.10,14.48 M273.20,13.25 L277.40,10.80 M275.30,9.58 L275.30,14.48" stroke="#f7f8f8" stroke-width="0.3" fill="none" opacity="1"/>
<polygon points="275.3,11 279.6,8.8 279.6,13.6 275.3,15.9" fill="#73b9d9" stroke="#fff" stroke-width="0.3"/>
<g stroke="#4ea5ce" stroke-width="0.5" stroke-linejoin="round" opacity="1"><polygon points="304.00,5.60 309.00,8.20 304.00,10.80 299.00,8.20" fill="#bfe0ee"/><polygon points="299.00,8.20 304.00,10.80 304.00,16.00 299.00,13.40" fill="#9ccfe5"/><polygon points="304.00,10.80 309.00,8.20 309.00,13.40 304.00,16.00" fill="#9ccfe5"/></g><path d="M301.50,6.90 L306.50,9.50 M306.50,6.90 L301.50,9.50 M299.00,10.80 L304.00,13.40 M301.50,9.50 L301.50,14.70 M304.00,13.40 L309.00,10.80 M306.50,9.50 L306.50,14.70" stroke="#d9edf6" stroke-width="0.3" fill="none" opacity="1"/>
<polygon points="324.8,9 331.2,5.9 331.2,13.4 324.8,16.4" fill="#73b9d9"/>
<g stroke="#c2c6c9" stroke-width="0.35" stroke-linejoin="round" opacity="1"><polygon points="331.70,8.90 335.00,10.75 331.70,12.60 328.40,10.75" fill="#e9ebec"/><polygon points="328.40,10.75 331.70,12.60 331.70,16.30 328.40,14.45" fill="#d4d7da"/><polygon points="331.70,12.60 335.00,10.75 335.00,14.45 331.70,16.30" fill="#d4d7da"/></g>
<polygon points="353.7,5 359,8 359,13.9 353.7,16.9 348.4,13.9 348.4,8" fill="none" stroke="#d3e8f2" stroke-width="0.5"/>
<g stroke="#ffffff" stroke-width="0.4" stroke-linejoin="round" opacity="1"><polygon points="353.80,7.10 357.20,9.05 353.80,11.00 350.40,9.05" fill="#73b9d9"/><polygon points="350.40,9.05 353.80,11.00 353.80,14.90 350.40,12.95" fill="#3f9cc7"/><polygon points="353.80,11.00 357.20,9.05 357.20,12.95 353.80,14.90" fill="#2a87b5"/></g><path d="M352.10,8.07 L355.50,10.03 M355.50,8.07 L352.10,10.03 M350.40,11.00 L353.80,12.95 M352.10,10.03 L352.10,13.93 M353.80,12.95 L357.20,11.00 M355.50,10.03 L355.50,13.93" stroke="#cfe7f2" stroke-width="0.3" fill="none" opacity="1"/>
<g stroke="#a6d3e8" stroke-width="0.35" stroke-linejoin="round" opacity="1"><polygon points="377.60,6.50 381.80,8.95 377.60,11.40 373.40,8.95" fill="#73b9d9"/><polygon points="373.40,8.95 377.60,11.40 377.60,16.30 373.40,13.85" fill="#3f9cc7"/><polygon points="377.60,11.40 381.80,8.95 381.80,13.85 377.60,16.30" fill="#3f9cc7"/></g>
<polygon points="375.6,7.3 380.4,5.6 380.4,14.6 375.6,16.3" fill="#3f9cc7" opacity="0.75"/>
<path d="M377.9,9.3 v6" stroke="#fff" stroke-width="0.5"/>
<g stroke="#8cc6e0" stroke-width="0.35" stroke-linejoin="round" opacity="1"><polygon points="402.40,6.20 407.80,8.55 402.40,10.90 397.00,8.55" fill="#73b9d9"/><polygon points="397.00,8.55 402.40,10.90 402.40,15.60 397.00,13.25" fill="#3f9cc7"/><polygon points="402.40,10.90 407.80,8.55 407.80,13.25 402.40,15.60" fill="#3f9cc7"/></g><path d="M399.70,7.38 L405.10,9.73 M405.10,7.38 L399.70,9.73 M397.00,10.90 L402.40,13.25 M399.70,9.73 L399.70,14.43 M402.40,13.25 L407.80,10.90 M405.10,9.73 L405.10,14.43" stroke="#9fd0e6" stroke-width="0.35" fill="none" opacity="1"/>
<path d="M399.6,9.6 l2.8,1.5 l2.8,-1.5 M402.4,11.1 v3" stroke="#2a87b5" stroke-width="0.5" fill="none"/>
<path d="M412.00,13.70 l1.9,1.8 l1.9,-1.8" fill="none" stroke="#7a7f84" stroke-width="0.6" stroke-linecap="round" stroke-linejoin="round"/>
<g stroke="#ffffff" stroke-width="0.3" stroke-linejoin="round" opacity="1"><polygon points="436.80,8.90 439.40,10.25 436.80,11.60 434.20,10.25" fill="#73b9d9"/><polygon points="434.20,10.25 436.80,11.60 436.80,14.30 434.20,12.95" fill="#3f9cc7"/><polygon points="436.80,11.60 439.40,10.25 439.40,12.95 436.80,14.30" fill="#2a87b5"/></g>
<path d="M436.8,9.2 V6.9 M435.6,8 l1.2,-1.3 l1.2,1.3 M434.4,13 l-1.7,1.4 M439.2,13 l1.7,1.4 M432.6,13.2 v1.3 h1.4 M441,13.2 v1.3 h-1.4" stroke="#3f9cc7" stroke-width="1" fill="none" stroke-linecap="round"/>
<path d="M447.90,13.70 l1.9,1.8 l1.9,-1.8" fill="none" stroke="#7a7f84" stroke-width="0.6" stroke-linecap="round" stroke-linejoin="round"/>
<g stroke="#4aa2cc" stroke-width="1.05" stroke-linejoin="round" opacity="1"><polygon points="470.00,6.10 474.50,8.60 470.00,11.10 465.50,8.60" fill="#eaf4f9"/><polygon points="465.50,8.60 470.00,11.10 470.00,16.10 465.50,13.60" fill="#eaf4f9"/><polygon points="470.00,11.10 474.50,8.60 474.50,13.60 470.00,16.10" fill="#eaf4f9"/></g>
<g stroke="#6db5d6" stroke-width="0.4" stroke-linejoin="round" opacity="1"><polygon points="493.90,6.60 497.90,8.85 493.90,11.10 489.90,8.85" fill="#3f9cc7"/><polygon points="489.90,8.85 493.90,11.10 493.90,15.60 489.90,13.35" fill="#2a87b5"/><polygon points="493.90,11.10 497.90,8.85 497.90,13.35 493.90,15.60" fill="#2a87b5"/></g>
<path d="M490.6,9.9 l3.3,1.8 l3.3,-1.8 M490.6,12.5 l3.3,1.8 l3.3,-1.8" stroke="#8fc7e0" stroke-width="0.4" fill="none"/>
<rect x="558.7" y="6.5" width="6.2" height="6.6" rx="1" fill="#fff" stroke="#73b9d9" stroke-width="0.8"/><rect x="556.2" y="8.5" width="6.4" height="6.9" rx="1" fill="#fff" stroke="#3f9cc7" stroke-width="0.8"/>
<g stroke="#fff" stroke-width="0.3"><polygon points="591.6,12.2 596.3,9.8 601,12.2 596.3,14.6" fill="#e9ebec"/><polygon points="591.6,12.2 596.3,14.6 596.3,16.9 591.6,14.5" fill="#d4d7da"/><polygon points="596.3,14.6 601,12.2 601,14.5 596.3,16.9" fill="#c2c6c9"/></g>
<g stroke="#ffffff" stroke-width="0.4" stroke-linejoin="round" opacity="1"><polygon points="594.40,5.10 597.90,7.00 594.40,8.90 590.90,7.00" fill="#73b9d9"/><polygon points="590.90,7.00 594.40,8.90 594.40,12.70 590.90,10.80" fill="#3f9cc7"/><polygon points="594.40,8.90 597.90,7.00 597.90,10.80 594.40,12.70" fill="#2a87b5"/></g><path d="M592.65,6.05 L596.15,7.95 M596.15,6.05 L592.65,7.95 M590.90,8.90 L594.40,10.80 M592.65,7.95 L592.65,11.75 M594.40,10.80 L597.90,8.90 M596.15,7.95 L596.15,11.75" stroke="#cfe7f2" stroke-width="0.3" fill="none" opacity="1"/>
<path d="M650.3,7.6 v6.8 M657,7.6 v6.8" stroke="#3f9cc7" stroke-width="1.1"/><path d="M651.5,11 h4.4 M652.6,9.8 l-1.2,1.2 l1.2,1.2 M654.8,9.8 l1.2,1.2 l-1.2,1.2" stroke="#3f9cc7" stroke-width="0.7" fill="none"/>
<rect x="682" y="6.5" width="5.6" height="6.3" rx="0.8" fill="#fff" stroke="#3f9cc7" stroke-width="0.8"/><rect x="678.7" y="8.9" width="6.2" height="6.6" rx="0.8" fill="#fff" stroke="#3f9cc7" stroke-width="0.8"/><rect x="682.4" y="8.9" width="2.5" height="3.5" fill="#73b9d9"/>
</svg>
<div class="btn" style="left:912.5px;top:6px;width:61px;height:17.5px;background:#fff;border:1px solid #e6e6e6"></div>
<svg class="abs" style="left:920px;top:9.7px" width="10" height="11" viewBox="0 0 10 11"><path d="M1.6,3 h6.4 M3.4,3 v-1 h2.8 v1 M2.3,3.2 l0.5,5.6 h4 l0.5,-5.6 M3.9,4.6 v3 M5.7,4.6 v3" fill="none" stroke="#7d8287" stroke-width="0.65" stroke-linecap="round" stroke-linejoin="round"/></svg>
<svg class="abs" style="left:970px;top:0" width="54" height="30" viewBox="970 0 54 30"><rect x="975.3" y="3.2" width="45.6" height="23.3" fill="#fff" stroke="#3e7de6" stroke-width="2.7"/></svg>
<div class="btn" style="left:978.1px;top:5.9px;width:40.1px;height:17.5px;background:#0a74a5;border-radius:2.5px;outline:1px dashed rgba(20,60,95,0.45);outline-offset:-1px"></div>
<svg class="abs" style="left:986px;top:10px" width="10" height="9" viewBox="0 0 10 9"><path d="M1.2,4.2 l2.3,2.7 l3.7,-4.4" fill="none" stroke="#fff" stroke-width="0.75" stroke-linecap="round" stroke-linejoin="round"/></svg>
<div class="panel" style="left:4px;top:34.4px;width:131.6px;height:103.8px"></div>
<div class="hl" style="left:5.4px;top:69.3px;width:129.4px;height:15.3px"></div>
<div class="sep" style="left:5.4px;top:118.2px;width:129.4px"></div>
<div class="panel" style="left:4px;top:140.4px;width:131.6px;height:19px"></div>
<div class="abs" style="left:137px;top:93px;width:2px;height:8.5px;background:#dcdcdc"></div>
<svg class="abs" style="left:0;top:30px" width="140" height="135" viewBox="0 30 140 135">
<path d="M11.8,43.7 l2.7,2.6 l2.7,-2.6" fill="none" stroke="#6d7277" stroke-width="0.9" stroke-linecap="round" stroke-linejoin="round"/>
<path d="M14.3,54.5 V74 M14.3,61.5 H17 M27.6,85.5 V106.3 M27.6,91.4 H30.4 M27.6,106.3 H30.4" stroke="#d3d9dd" stroke-width="0.6" fill="none"/>
<rect x="12.6" y="74.8" width="4.6" height="4.6" fill="#fff" stroke="#dfe3e6" stroke-width="0.5"/><path d="M13.6,77.1 h2.6" stroke="#5f6469" stroke-width="0.7"/>
<g stroke="#fff" stroke-width="0.2" stroke-linejoin="round" opacity="1"><polygon points="27.00,41.60 28.70,42.45 27.00,43.30 25.30,42.45" fill="#a9aeb2"/><polygon points="25.30,42.45 27.00,43.30 27.00,45.00 25.30,44.15" fill="#868b90"/><polygon points="27.00,43.30 28.70,42.45 28.70,44.15 27.00,45.00" fill="#73797e"/></g>
<g stroke="#fff" stroke-width="0.2" stroke-linejoin="round" opacity="1"><polygon points="24.90,44.90 26.60,45.75 24.90,46.60 23.20,45.75" fill="#a9aeb2"/><polygon points="23.20,45.75 24.90,46.60 24.90,48.30 23.20,47.45" fill="#868b90"/><polygon points="24.90,46.60 26.60,45.75 26.60,47.45 24.90,48.30" fill="#73797e"/></g>
<g stroke="#fff" stroke-width="0.2" stroke-linejoin="round" opacity="1"><polygon points="29.00,44.90 30.70,45.75 29.00,46.60 27.30,45.75" fill="#a9aeb2"/><polygon points="27.30,45.75 29.00,46.60 29.00,48.30 27.30,47.45" fill="#868b90"/><polygon points="29.00,46.60 30.70,45.75 30.70,47.45 29.00,48.30" fill="#73797e"/></g>
<g transform="translate(0,1.1)"><path d="M24.3,63.4 l1.9,1.1 l3.4,-1.8 v-4.4 l-1.6,-0.8 l-1.7,0.9 v2.8 l-2,1 z" fill="#8c9196" stroke="#fff" stroke-width="0.25"/><path d="M26.3,61.2 l-0.1,3.3 M26.3,59 l1.7,0.8 v2.6" stroke="#fff" stroke-width="0.3" fill="none"/></g>
<path d="M28.2,74.6 h-3.3 a0.9,0.9 0 0 0 -0.9,0.9 v4 a0.9,0.9 0 0 0 0.9,0.9 h4 a0.9,0.9 0 0 0 0.9,-0.9 v-3" fill="none" stroke="#63686d" stroke-width="0.7"/><path d="M26.4,78.5 l0.4,-1.5 l3.3,-3.4 l1.1,1.1 l-3.3,3.4 z" fill="#fff" stroke="#63686d" stroke-width="0.6" stroke-linejoin="round"/>
<g stroke="#8fcae4" stroke-width="0.3" stroke-linejoin="round" opacity="1"><polygon points="40.20,88.70 43.60,90.50 40.20,92.30 36.80,90.50" fill="#7cc0de"/><polygon points="36.80,90.50 40.20,92.30 40.20,95.90 36.80,94.10" fill="#3f9cc7"/><polygon points="40.20,92.30 43.60,90.50 43.60,94.10 40.20,95.90" fill="#3f9cc7"/></g>
<polygon points="38.6,89.4 42.6,87.7 42.6,94.6 38.6,96.2" fill="#3797c4" opacity="0.85"/>
<path d="M40.5,90.8 v4.4 M41.2,90.2 l1.3,-0.7" stroke="#e4f2f9" stroke-width="0.4"/>
<g stroke="#8fcae4" stroke-width="0.3" stroke-linejoin="round" opacity="1"><polygon points="40.20,103.70 43.60,105.50 40.20,107.30 36.80,105.50" fill="#7cc0de"/><polygon points="36.80,105.50 40.20,107.30 40.20,110.90 36.80,109.10" fill="#3f9cc7"/><polygon points="40.20,107.30 43.60,105.50 43.60,109.10 40.20,110.90" fill="#3f9cc7"/></g>
<polygon points="38.6,104.4 42.6,102.7 42.6,109.6 38.6,111.2" fill="#3797c4" opacity="0.85"/>
<path d="M40.5,105.8 v4.4 M41.2,105.2 l1.3,-0.7" stroke="#e4f2f9" stroke-width="0.4"/>
<circle cx="124.5" cy="45.0" r="3.9" fill="#fff" stroke="#d3d6d9" stroke-width="0.5"/><path d="M123.2,45.0 h2.6 M124.5,43.7 v2.6" stroke="#73787d" stroke-width="0.6"/>
<circle cx="124.5" cy="128.6" r="3.9" fill="#fff" stroke="#d3d6d9" stroke-width="0.5"/><path d="M123.2,128.6 h2.6 M124.5,127.3 v2.6" stroke="#73787d" stroke-width="0.6"/>
<g stroke="#fff" stroke-width="0.2" stroke-linejoin="round" opacity="1"><polygon points="14.20,123.50 16.50,124.70 14.20,125.90 11.90,124.70" fill="#5fb0d6"/><polygon points="11.90,124.70 14.20,125.90 14.20,128.30 11.90,127.10" fill="#2a87b5"/><polygon points="14.20,125.90 16.50,124.70 16.50,127.10 14.20,128.30" fill="#1d6f99"/></g>
<g stroke="#fff" stroke-width="0.2" stroke-linejoin="round" opacity="1"><polygon points="11.90,127.90 14.20,129.10 11.90,130.30 9.60,129.10" fill="#5fb0d6"/><polygon points="9.60,129.10 11.90,130.30 11.90,132.70 9.60,131.50" fill="#2a87b5"/><polygon points="11.90,130.30 14.20,129.10 14.20,131.50 11.90,132.70" fill="#1d6f99"/></g>
<g stroke="#fff" stroke-width="0.2" stroke-linejoin="round" opacity="1"><polygon points="16.50,127.90 18.80,129.10 16.50,130.30 14.20,129.10" fill="#f3d24a"/><polygon points="14.20,129.10 16.50,130.30 16.50,132.70 14.20,131.50" fill="#d9b326"/><polygon points="16.50,130.30 18.80,129.10 18.80,131.50 16.50,132.70" fill="#c29d16"/></g>
<circle cx="14.2" cy="128.9" r="1.1" fill="#8bbf3f"/>
</svg>
<div class="panel" style="left:894px;top:34.4px;width:127px;height:103.8px"></div>
<div class="sep" style="left:895.4px;top:118.4px;width:124px"></div>
<div class="abs" style="left:891px;top:98px;width:2px;height:9px;background:#dcdcdc"></div>
<svg class="abs" style="left:884px;top:30px" width="140" height="140" viewBox="884 30 140 140">
<path d="M901.9,43.2 l2.7,2.6 l2.7,-2.6" fill="none" stroke="#6d7277" stroke-width="0.9" stroke-linecap="round" stroke-linejoin="round"/>
<path d="M904.8,54.5 V59 M918.4,67.5 V106.6 M918.4,76.4 H921 M918.4,91.5 H921 M918.4,106.6 H921" stroke="#d3d9dd" stroke-width="0.6" fill="none"/>
<rect x="902.5" y="59.3" width="4.6" height="4.6" fill="#fff" stroke="#dfe3e6" stroke-width="0.5"/><path d="M903.5,61.6 h2.6" stroke="#5f6469" stroke-width="0.7"/>
<g stroke="#fff" stroke-width="0.25" stroke-linejoin="round" opacity="1"><polygon points="929.70,72.90 933.30,74.85 929.70,76.80 926.10,74.85" fill="#e6e8e9"/><polygon points="926.10,74.85 929.70,76.80 929.70,80.70 926.10,78.75" fill="#9a9fa3"/><polygon points="929.70,76.80 933.30,74.85 933.30,78.75 929.70,80.70" fill="#c3c6c9"/></g>
<g stroke="#fff" stroke-width="0.25" stroke-linejoin="round" opacity="1"><polygon points="929.70,88.00 933.30,89.95 929.70,91.90 926.10,89.95" fill="#e6e8e9"/><polygon points="926.10,89.95 929.70,91.90 929.70,95.80 926.10,93.85" fill="#9a9fa3"/><polygon points="929.70,91.90 933.30,89.95 933.30,93.85 929.70,95.80" fill="#c3c6c9"/></g>
<g stroke="#fff" stroke-width="0.25" stroke-linejoin="round" opacity="1"><polygon points="929.70,103.10 933.30,105.05 929.70,107.00 926.10,105.05" fill="#e6e8e9"/><polygon points="926.10,105.05 929.70,107.00 929.70,110.90 926.10,108.95" fill="#9a9fa3"/><polygon points="929.70,107.00 933.30,105.05 933.30,108.95 929.70,110.90" fill="#c3c6c9"/></g>
<rect x="1000.5" y="125.9" width="13.4" height="5.4" rx="2.7" fill="#ececec"/><circle cx="1004.4" cy="128.6" r="3.9" fill="#fff" stroke="#d0d3d6" stroke-width="0.6"/>
</svg>
<svg class="abs" style="left:985px;top:30px" width="28" height="62" viewBox="985 30 28 62"><path d="M998.2,32.1 L1006.9,48.2 H1001.2 V85 a3,3 0 0 1 -6,0 V48.2 H989.5 Z" fill="#3e7de6"/></svg>
<div class="btn" style="left:958.4px;top:144.6px;width:61.2px;height:20.4px;background:#fff;border:1px solid #f0f0f0;box-shadow:0 0 1px rgba(0,0,0,0.05)"></div>
<svg class="abs" style="left:968px;top:150px" width="12" height="11" viewBox="0 0 12 11"><path d="M1.6,2 h5 a0.6,0.6 0 0 1 0.6,0.6 v3.2 a0.6,0.6 0 0 1 -0.6,0.6 h-2.8 l-1.6,1.3 v-1.3 h-0.6 a0.6,0.6 0 0 1 -0.6,-0.6 v-3.2 a0.6,0.6 0 0 1 0.6,-0.6 z" fill="#474c51"/><path d="M8,3.6 h1.9 a0.6,0.6 0 0 1 0.6,0.6 v3.3 a0.6,0.6 0 0 1 -0.6,0.6 h-0.5 v1.3 l-1.6,-1.3 h-2.3 a0.6,0.6 0 0 1 -0.6,-0.6 v-0.5 h2.5 a0.6,0.6 0 0 0 0.6,-0.6 z" fill="#474c51"/></svg>
<div class="abs" style="left:555.4px;top:36.8px;width:20.2px;height:20.4px;background:#f8f6f2;border:1px solid #d6e7f1;border-radius:2px"></div>
<div class="abs" style="left:624.4px;top:36.8px;width:20.6px;height:20.4px;background:#f8f6f2;border:1px solid #d6e7f1;border-radius:2px"></div>
<svg class="abs" style="left:505px;top:32px" width="215" height="30" viewBox="505 32 215 30">
<g stroke="#8d9195" stroke-width="0.3" stroke-linejoin="round" opacity="1"><polygon points="519.00,43.40 522.90,45.50 519.00,47.60 515.10,45.50" fill="#d9dbdc"/><polygon points="515.10,45.50 519.00,47.60 519.00,51.80 515.10,49.70" fill="#9fa3a6"/><polygon points="519.00,47.60 522.90,45.50 522.90,49.70 519.00,51.80" fill="#b9bcbe"/></g>
<path d="M524,53.6 l1.3,-1.3 v1.3 z" fill="#8d9195"/>
<g stroke="#33383c" stroke-width="0.7" stroke-linejoin="round" opacity="1"><polygon points="542.00,43.30 546.00,45.45 542.00,47.60 538.00,45.45" fill="#f2b6a0"/><polygon points="538.00,45.45 542.00,47.60 542.00,51.90 538.00,49.75" fill="#e2541f"/><polygon points="542.00,47.60 546.00,45.45 546.00,49.75 542.00,51.90" fill="#e2541f"/></g>
<g stroke="#33383c" stroke-width="0.7" stroke-linejoin="round" opacity="1"><polygon points="565.00,43.30 569.00,45.45 565.00,47.60 561.00,45.45" fill="#ffffff"/><polygon points="561.00,45.45 565.00,47.60 565.00,51.90 561.00,49.75" fill="#e2541f"/><polygon points="565.00,47.60 569.00,45.45 569.00,49.75 565.00,51.90" fill="#ffffff"/></g>
<polygon points="588,43.3 592,45.5 592,49.7 588,51.9 584,49.7 584,45.5" fill="none" stroke="#33383c" stroke-width="0.6" stroke-dasharray="1,0.9"/>
<path d="M588,47.6 V51.9 M588,47.6 L584,45.5 M588,47.6 L592,45.5" stroke="#33383c" stroke-width="0.5" stroke-dasharray="1,0.9"/>
<circle cx="588.0" cy="43.3" r="0.8" fill="#33383c"/>
<circle cx="592.0" cy="45.5" r="0.8" fill="#e2541f"/>
<circle cx="592.0" cy="49.7" r="0.8" fill="#e2541f"/>
<circle cx="588.0" cy="51.9" r="0.8" fill="#33383c"/>
<circle cx="584.0" cy="49.7" r="0.8" fill="#e2541f"/>
<circle cx="584.0" cy="45.5" r="0.8" fill="#e2541f"/>
<polygon points="610.8,43.3 614.8,45.5 614.8,49.7 610.8,51.9 606.8,49.7 606.8,45.5" fill="#fbe9e2" stroke="#e2541f" stroke-width="0.8"/>
<path d="M610.8,47.6 V51.9 M610.8,47.6 L606.8,45.5 M610.8,47.6 L614.8,45.5" stroke="#e2541f" stroke-width="0.7"/>
<circle cx="610.8" cy="43.3" r="0.85" fill="#e2541f"/>
<circle cx="614.8" cy="45.5" r="0.85" fill="#e2541f"/>
<circle cx="614.8" cy="49.7" r="0.85" fill="#e2541f"/>
<circle cx="610.8" cy="51.9" r="0.85" fill="#e2541f"/>
<circle cx="606.8" cy="49.7" r="0.85" fill="#e2541f"/>
<circle cx="606.8" cy="45.5" r="0.85" fill="#e2541f"/>
<circle cx="634.6" cy="44.7" r="2.4" fill="#2f3438"/><path d="M634.6,46.5 V51.6" stroke="#2f3438" stroke-width="0.7"/><circle cx="634.6" cy="51.4" r="0.7" fill="#2f3438"/>
<rect x="647.2" y="44.5" width="0.5" height="6" fill="#e4e4e4"/><rect x="692.4" y="44.5" width="0.5" height="6" fill="#e4e4e4"/>
<rect x="654.3" y="43.3" width="7" height="6.2" fill="none" stroke="#33383c" stroke-width="0.8" stroke-dasharray="1.4,1"/><path d="M659.6,48.2 l3,2.3 l-1.4,0.3 l0.8,1.5 l-0.7,0.4 l-0.8,-1.5 l-0.9,0.9 z" fill="#2f3438"/>
<g stroke="#c5c8ca" stroke-width="0.4" stroke-linejoin="round" opacity="1"><polygon points="680.00,43.80 683.40,45.70 680.00,47.60 676.60,45.70" fill="#eeeeee"/><polygon points="676.60,45.70 680.00,47.60 680.00,51.40 676.60,49.50" fill="#dadcdd"/><polygon points="680.00,47.60 683.40,45.70 683.40,49.50 680.00,51.40" fill="#e3e4e5"/></g>
<path d="M680,42 v2 M676,50.3 l-1.6,1 M684,50.3 l1.6,1" stroke="#c5c8ca" stroke-width="0.5"/>
<path d="M698.6,51.8 l3.8,-1.2 v-4.5 a2.6,2.6 0 0 1 5.2,0 v3 l-5.2,1.5 M698.6,51.8 l0.3,0.9 l4.2,-1.3 M705,47.5 v-1.2 a0.9,0.9 0 0 0 -1.8,0 v1.5" fill="none" stroke="#8d9297" stroke-width="0.7" stroke-linejoin="round"/>
</svg>
<svg class="abs" style="left:975px;top:340px" width="49" height="52" viewBox="975 340 49 52">
<defs><filter id="cb" x="-30%" y="-30%" width="160%" height="160%"><feGaussianBlur stdDeviation="1"/></filter></defs><circle cx="1001.1" cy="367.2" r="18.3" fill="#e9e9e9" filter="url(#cb)"/><circle cx="1001.1" cy="366.2" r="12.9" fill="#0a74a5"/>
<path d="M997.1,360.2 h8.2 a1.4,1.4 0 0 1 1.4,1.4 v10.9 l-1.9,-1.3 h-7.7 a1.4,1.4 0 0 1 -1.4,-1.4 v-8.2 a1.4,1.4 0 0 1 1.4,-1.4 z" fill="#fff"/><path d="M997.6,368 q3.6,2.6 7.2,0" fill="none" stroke="#0a74a5" stroke-width="0.8" stroke-linecap="round"/>
</svg>
<svg class="abs" style="left:924px;top:372px" width="100" height="106" viewBox="924 372 100 106">
<polygon points="971.0,398.2 993.5,411.8 993.5,437.3 971.0,450.1 948.4,437.3 948.4,411.8" fill="#fafafa" fill-opacity="0.85"/>
<path d="M971,398.4 V381.2" stroke="#74d67a" stroke-width="0.9"/>
<path d="M971.0,424.2 L993.5,437.3" stroke="#f3cfc5" stroke-width="0.7"/><path d="M993.5,437.3 L1004.6,443.6" stroke="#e9a08d" stroke-width="0.8"/>
<path d="M971.0,424.2 L948.4,437.3" stroke="#c9dbf5" stroke-width="0.7"/><path d="M948.4,437.3 L938,443.3" stroke="#8fb4ea" stroke-width="0.8"/>
<path d="M1003.2,441.9 l2.6,2.2 l-3.3,0.5 z" fill="#e08772"/><path d="M939.6,441.6 l-2.8,2.2 l3.4,0.7 z" fill="#5f8fe0"/>
<g fill="none" stroke="#b9bcbf" stroke-width="0.7" stroke-linejoin="round"><polygon points="971.0,398.2 993.5,411.8 993.5,437.3 971.0,450.1 948.4,437.3 948.4,411.8"/><path d="M971.0,424.2 L948.4,411.8 M971.0,424.2 L993.5,411.8 M971.0,424.2 L971.0,450.1"/></g>
<path d="M971,424.2 V450.1" stroke="#c4c7c9" stroke-width="0.7"/>
<path d="M-2.2,1.1 L0,-1.1 L2.2,1.1" transform="translate(971.6,384.9) rotate(0)" fill="none" stroke="#50555a" stroke-width="0.8" stroke-linecap="round" stroke-linejoin="round"/>
<path d="M-2.2,1.1 L0,-1.1 L2.2,1.1" transform="translate(972.0,464.3) rotate(180)" fill="none" stroke="#7d8287" stroke-width="0.8" stroke-linecap="round" stroke-linejoin="round"/>
<path d="M-2.2,1.1 L0,-1.1 L2.2,1.1" transform="translate(932.2,424.2) rotate(-90)" fill="none" stroke="#7d8287" stroke-width="0.8" stroke-linecap="round" stroke-linejoin="round"/>
<path d="M-2.2,1.1 L0,-1.1 L2.2,1.1" transform="translate(1012.3,424.2) rotate(90)" fill="none" stroke="#7d8287" stroke-width="0.8" stroke-linecap="round" stroke-linejoin="round"/>
<path d="M995.8,398.8 l2.8,-2.6 l2.8,2.6 M996.6,398.4 v2.9 h4 v-2.9 M998,401.3 v-1.6 h1.2 v1.6" fill="none" stroke="#7d8287" stroke-width="0.6" stroke-linejoin="round" stroke-linecap="round"/>
<path d="M942.4,450.5 a2.7,2.7 0 1 1 1.2,4.3" fill="none" stroke="#7d8287" stroke-width="0.7" stroke-linecap="round"/><path d="M941.2,449.6 l1.1,1.9 l1.7,-1.2" fill="none" stroke="#7d8287" stroke-width="0.7" stroke-linecap="round" stroke-linejoin="round"/>
<path d="M1001.2,450.5 a2.7,2.7 0 1 0 -1.2,4.3" fill="none" stroke="#7d8287" stroke-width="0.7" stroke-linecap="round"/><path d="M1002.4,449.6 l-1.1,1.9 l-1.7,-1.2" fill="none" stroke="#7d8287" stroke-width="0.7" stroke-linecap="round" stroke-linejoin="round"/>
</svg>
<span class="tx" style="left:963px;top:409.5px;font-size:3.6px;color:#9da1a5;transform:rotate(26deg) skewX(-28deg);transform-origin:50% 50%">LEFT</span>
<span class="tx" style="left:956.5px;top:429px;font-size:3.6px;color:#9da1a5;transform:rotate(30deg) skewX(28deg);transform-origin:50% 50%">Top</span>
<span class="tx" style="left:976px;top:429.5px;font-size:3.6px;color:#9da1a5;transform:rotate(-30deg) skewX(-28deg);transform-origin:50% 50%">BACK</span>
<svg class="abs" style="left:0;top:0;will-change:transform;font-family:&quot;Liberation Sans&quot;,sans-serif" width="1024" height="478" viewBox="0 0 1024 478">
<text transform="translate(504.20,475.00) scale(0.8932,1)" font-size="7.30" fill="#50555a" stroke="#50555a" stroke-width="0.18" >0.1 m</text>
<text transform="translate(6.80,17.00) scale(0.8654,1)" font-size="5.40" fill="#6a6f74" stroke="#6a6f74" stroke-width="0.18" >CREATE</text>
<text transform="translate(117.20,17.00) scale(0.9011,1)" font-size="5.40" fill="#6a6f74" stroke="#6a6f74" stroke-width="0.18" >FACE</text>
<text transform="translate(216.60,17.00) scale(0.9341,1)" font-size="5.40" fill="#6a6f74" stroke="#6a6f74" stroke-width="0.18" >BODY</text>
<text transform="translate(517.40,17.00) scale(0.9845,1)" font-size="5.40" fill="#6a6f74" stroke="#6a6f74" stroke-width="0.18" >MODEL</text>
<text transform="translate(621.70,17.00) scale(0.9177,1)" font-size="5.40" fill="#6a6f74" stroke="#6a6f74" stroke-width="0.18" >TOOLS</text>
<text transform="translate(33.40,23.00) scale(0.8674,1)" font-size="5.40" fill="#33383d" stroke="#33383d" stroke-width="0.18" >Flow volume</text>
<text transform="translate(74.00,23.00) scale(0.8928,1)" font-size="5.40" fill="#33383d" stroke="#33383d" stroke-width="0.18" >Primitives</text>
<text transform="translate(138.20,23.00) scale(0.8843,1)" font-size="5.40" fill="#33383d" stroke="#33383d" stroke-width="0.18" >Delete</text>
<text transform="translate(162.90,23.00) scale(0.8786,1)" font-size="5.40" fill="#33383d" stroke="#33383d" stroke-width="0.18" >Move</text>
<text transform="translate(184.40,23.00) scale(0.8762,1)" font-size="5.40" fill="#33383d" stroke="#33383d" stroke-width="0.18" >Extrude</text>
<text transform="translate(239.40,23.00) scale(0.8779,1)" font-size="5.40" fill="#33383d" stroke="#33383d" stroke-width="0.18" >Delete</text>
<text transform="translate(262.00,23.00) scale(0.8312,1)" font-size="5.40" fill="#33383d" stroke="#33383d" stroke-width="0.18" >Close sheet</text>
<text transform="translate(293.70,23.00) scale(0.8578,1)" font-size="5.40" fill="#33383d" stroke="#33383d" stroke-width="0.18" >Facet split</text>
<text transform="translate(322.90,23.00) scale(0.9153,1)" font-size="5.40" fill="#33383d" stroke="#33383d" stroke-width="0.18" >Imprint</text>
<text transform="translate(348.70,23.00) scale(0.7704,1)" font-size="5.40" fill="#33383d" stroke="#33383d" stroke-width="0.18" >Scale</text>
<text transform="translate(373.00,23.00) scale(0.8474,1)" font-size="5.40" fill="#33383d" stroke="#33383d" stroke-width="0.18" >Split</text>
<text transform="translate(394.00,23.00) scale(0.8528,1)" font-size="5.40" fill="#33383d" stroke="#33383d" stroke-width="0.18" >Boolean</text>
<text transform="translate(426.00,23.00) scale(0.8891,1)" font-size="5.40" fill="#33383d" stroke="#33383d" stroke-width="0.18" >Transform</text>
<text transform="translate(461.60,23.00) scale(0.8836,1)" font-size="5.40" fill="#33383d" stroke="#33383d" stroke-width="0.18" >Simplify</text>
<text transform="translate(488.30,23.00) scale(0.8986,1)" font-size="5.40" fill="#33383d" stroke="#33383d" stroke-width="0.18" >Wrap</text>
<text transform="translate(543.50,23.00) scale(0.8846,1)" font-size="5.40" fill="#33383d" stroke="#33383d" stroke-width="0.18" >Fix interferences</text>
<text transform="translate(586.30,23.00) scale(0.8615,1)" font-size="5.40" fill="#33383d" stroke="#33383d" stroke-width="0.18" >Add CAD</text>
<text transform="translate(648.00,23.00) scale(0.8368,1)" font-size="5.40" fill="#33383d" stroke="#33383d" stroke-width="0.18" >Gaps</text>
<text transform="translate(669.00,23.00) scale(0.8918,1)" font-size="5.40" fill="#33383d" stroke="#33383d" stroke-width="0.18" >Interferences</text>
<text transform="translate(933.00,18.00) scale(0.8007,1)" font-size="8.60" fill="#3f4449" stroke="#3f4449" stroke-width="0.18" >Delete draft</text>
<text transform="translate(997.90,17.00) scale(0.7207,1)" font-size="8.20" font-weight="bold" fill="#ffffff" >Save</text>
<text transform="translate(34.70,47.00) scale(0.7549,1)" font-size="8.60" font-weight="bold" fill="#3a3f44" >GEOMETRIES</text>
<text transform="translate(34.70,64.00) scale(0.8039,1)" font-size="8.60" fill="#3a3f44" stroke="#3a3f44" stroke-width="0.18" >Wheel</text>
<text transform="translate(34.70,79.00) scale(0.7810,1)" font-size="8.60" fill="#3a3f44" stroke="#3a3f44" stroke-width="0.18" >Wheel - Copy</text>
<text transform="translate(47.60,94.00) scale(0.7951,1)" font-size="8.60" fill="#3a3f44" stroke="#3a3f44" stroke-width="0.18" >Split</text>
<text transform="translate(47.60,109.00) scale(0.7951,1)" font-size="8.60" fill="#3a3f44" stroke="#3a3f44" stroke-width="0.18" >Split</text>
<text transform="translate(22.00,131.00) scale(0.7733,1)" font-size="8.60" font-weight="bold" fill="#3a3f44" >SIMULATIONS (0)</text>
<text transform="translate(10.50,153.00) scale(0.8256,1)" font-size="8.60" font-weight="bold" fill="#3a3f44" >Job status</text>
<text transform="translate(912.00,47.00) scale(0.7691,1)" font-size="8.60" font-weight="bold" fill="#3a3f44" >GEOMETRY</text>
<text transform="translate(912.00,64.00) scale(0.7526,1)" font-size="8.60" font-weight="bold" fill="#3a3f44" >Wheel - Copy</text>
<text transform="translate(937.70,79.00) scale(0.8089,1)" font-size="8.60" fill="#3a3f44" stroke="#3a3f44" stroke-width="0.18" >Ground</text>
<text transform="translate(937.70,94.00) scale(0.8124,1)" font-size="8.60" fill="#3a3f44" stroke="#3a3f44" stroke-width="0.18" >Mount and Tire</text>
<text transform="translate(937.70,109.00) scale(0.7599,1)" font-size="8.60" fill="#3a3f44" stroke="#3a3f44" stroke-width="0.18" >Rim</text>
<text transform="translate(901.00,131.00) scale(0.7647,1)" font-size="8.60" fill="#3a3f44" stroke="#3a3f44" stroke-width="0.18" >Show faces</text>
<text transform="translate(982.80,159.00) scale(0.8552,1)" font-size="8.60" fill="#3f4449" stroke="#3f4449" stroke-width="0.18" >AI Agent</text>
<text transform="translate(968.60,381.80) scale(0.9569,1)" font-size="6.60" fill="#5fcf66" stroke="#5fcf66" stroke-width="0.18" >Y</text>
<text transform="translate(1007.70,449.00) scale(0.9797,1)" font-size="6.60" fill="#e47865" stroke="#e47865" stroke-width="0.18" >X</text>
<text transform="translate(930.40,449.00) scale(0.9935,1)" font-size="6.60" fill="#4a7be0" stroke="#4a7be0" stroke-width="0.18" >Z</text>
</svg>
</body>
</html>
